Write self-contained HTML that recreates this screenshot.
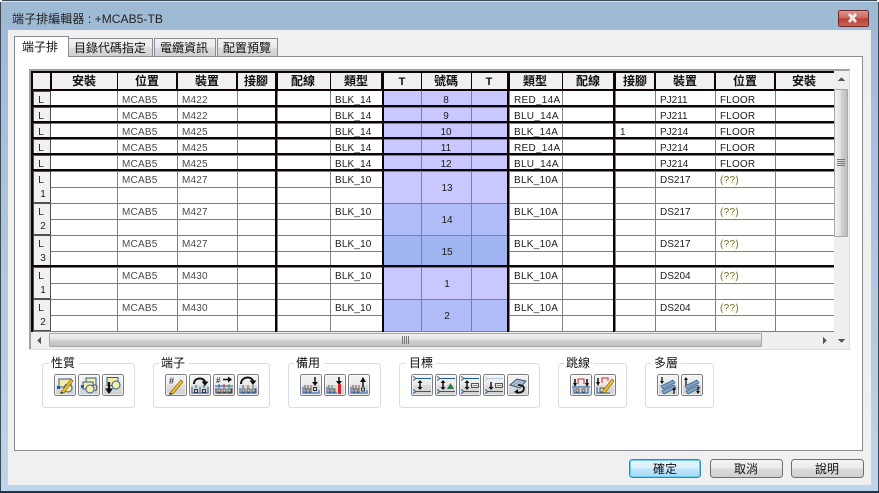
<!DOCTYPE html>
<html><head><meta charset="utf-8"><style>
html,body{margin:0;padding:0;background:#b9d2ea}
svg{display:block;position:absolute;left:0;top:0}
text{font-family:"Liberation Sans","Noto Sans CJK TC",sans-serif;font-size:10px;fill:#1c1c1c}
.c{font-family:"Liberation Sans","Noto Sans CJK TC",sans-serif;font-size:12px;fill:#111}
.h{font-family:"Liberation Sans","Noto Sans CJK TC",sans-serif;font-size:12px;font-weight:bold;fill:#111;text-anchor:middle}
.m{text-anchor:middle}
.g{fill:#4a4a4a;letter-spacing:.2px}
.y{fill:#7a6a20;letter-spacing:.3px}
.t{letter-spacing:.28px}
.k{letter-spacing:.15px}
</style></head><body>
<svg width="879" height="493" viewBox="0 0 879 493" shape-rendering="crispEdges">
<defs>
<linearGradient id="tb" x1="0" y1="0" x2="0" y2="1"><stop offset="0" stop-color="#9db9d4"/><stop offset="1" stop-color="#bdd5ec"/></linearGradient>
<linearGradient id="tab" x1="0" y1="0" x2="0" y2="1"><stop offset="0" stop-color="#f3f3f3"/><stop offset=".5" stop-color="#ebebeb"/><stop offset=".5" stop-color="#dddddd"/><stop offset="1" stop-color="#cfcfcf"/></linearGradient>
<linearGradient id="btn" x1="0" y1="0" x2="0" y2="1"><stop offset="0" stop-color="#f4f4f4"/><stop offset=".5" stop-color="#ebebeb"/><stop offset=".5" stop-color="#dcdcdc"/><stop offset="1" stop-color="#cfcfcf"/></linearGradient>
<linearGradient id="ok" x1="0" y1="0" x2="0" y2="1"><stop offset="0" stop-color="#eaf6fd"/><stop offset=".5" stop-color="#d9f0fc"/><stop offset=".5" stop-color="#bee6fd"/><stop offset="1" stop-color="#a7d9f5"/></linearGradient>
<linearGradient id="cl" x1="0" y1="0" x2="0" y2="1"><stop offset="0" stop-color="#dc9a92"/><stop offset=".5" stop-color="#c8635a"/><stop offset=".5" stop-color="#b93a30"/><stop offset="1" stop-color="#c9685e"/></linearGradient>
<linearGradient id="sh" x1="0" y1="0" x2="0" y2="1"><stop offset="0" stop-color="#f2f2f2"/><stop offset=".45" stop-color="#e4e4e4"/><stop offset=".5" stop-color="#d4d4d4"/><stop offset="1" stop-color="#bcbcbc"/></linearGradient>
<linearGradient id="sv" x1="0" y1="0" x2="1" y2="0"><stop offset="0" stop-color="#f2f2f2"/><stop offset=".45" stop-color="#e4e4e4"/><stop offset=".5" stop-color="#d4d4d4"/><stop offset="1" stop-color="#bcbcbc"/></linearGradient>
<g id="b"><rect x=".5" y=".5" width="21" height="21" rx="2" fill="url(#btn)" stroke="#7d7d7d"/><rect x="1.5" y="1.5" width="19" height="19" rx="1" fill="none" stroke="#fff" stroke-opacity=".6"/></g>
</defs>

<!-- window frame -->
<rect x="0" y="0" width="879" height="493" fill="#3d4a55"/>
<rect x="1" y="1" width="877" height="490" fill="url(#tb)"/>
<rect x="1" y="1" width="877" height="1" fill="#d5e2ee"/>
<rect x="8" y="30" width="863" height="455" fill="#f0f0f0"/>
<rect x="0" y="491" width="879" height="2" fill="#26333d"/>
<rect x="0" y="0" width="2" height="1" fill="#fff"/><rect x="0" y="1" width="1" height="1" fill="#fff"/><rect x="877" y="0" width="2" height="1" fill="#fff"/><rect x="878" y="1" width="1" height="1" fill="#fff"/>
<text x="12" y="23" class="c" style="fill:#222;letter-spacing:.07px">端子排編輯器 : +MCAB5-TB</text>

<!-- close -->
<rect x="838.5" y="10.5" width="30" height="16" rx="2" fill="url(#cl)" stroke="#6e2a28"/>
<g shape-rendering="auto"><path d="M849 14l7 8M856 14l-7 8" stroke="#fff" stroke-width="2.6" fill="none"/><path d="M849 14l7 8M856 14l-7 8" stroke="#555" stroke-width=".5" fill="none" opacity=".4"/></g>

<!-- tab page -->
<rect x="14.5" y="56.5" width="848" height="394" fill="#fff" stroke="#898c95"/>
<rect x="68.5" y="38.5" width="84" height="18" fill="url(#tab)" stroke="#898c95"/>
<rect x="154.5" y="38.5" width="61" height="18" fill="url(#tab)" stroke="#898c95"/>
<rect x="217.5" y="38.5" width="60" height="18" fill="url(#tab)" stroke="#898c95"/>
<rect x="14.5" y="36.5" width="54" height="20" fill="#fff" stroke="#898c95"/>
<rect x="15" y="56" width="53" height="1" fill="#fff"/>
<text x="22" y="51" class="c">端子排</text>
<text x="74" y="52" class="c">目錄代碼指定</text>
<text x="160" y="52" class="c">電纜資訊</text>
<text x="223" y="52" class="c">配置預覽</text>

<!-- grid frame -->
<rect x="29" y="69" width="821" height="281" fill="#f0f0f0"/>
<rect x="29" y="69" width="821" height="2" fill="#a0a0a0"/>
<rect x="29" y="69" width="2" height="281" fill="#a0a0a0"/>
<rect x="849" y="70" width="1" height="280" fill="#e0e0e0"/>
<rect x="29" y="349" width="821" height="1" fill="#e0e0e0"/>
<rect x="33" y="91" width="801" height="241" fill="#fff"/>

<!-- blue cells -->
<rect x="384" y="91" width="123" height="112" fill="#c8c8ff"/>
<rect x="384" y="203" width="123" height="32" fill="#b0bcf8"/>
<rect x="384" y="235" width="123" height="32" fill="#a0b4f2"/>
<rect x="384" y="267" width="123" height="32" fill="#c8c8ff"/>
<rect x="384" y="299" width="123" height="32" fill="#b0bcf8"/>

<!-- gray horizontals -->
<g fill="#808080">
<rect x="33" y="107" width="801" height="1"/><rect x="33" y="123" width="801" height="1"/><rect x="33" y="139" width="801" height="1"/><rect x="33" y="155" width="801" height="1"/><rect x="33" y="171" width="801" height="1"/>
<rect x="33" y="187" width="349" height="1"/><rect x="509" y="187" width="325" height="1"/>
<rect x="33" y="203" width="801" height="1"/>
<rect x="33" y="219" width="349" height="1"/><rect x="509" y="219" width="325" height="1"/>
<rect x="33" y="235" width="801" height="1"/>
<rect x="33" y="251" width="349" height="1"/><rect x="509" y="251" width="325" height="1"/>
<rect x="33" y="267" width="801" height="1"/>
<rect x="33" y="283" width="349" height="1"/><rect x="509" y="283" width="325" height="1"/>
<rect x="33" y="299" width="801" height="1"/>
<rect x="33" y="315" width="349" height="1"/><rect x="509" y="315" width="325" height="1"/>
<rect x="33" y="331" width="801" height="1"/>
<!-- gray verticals -->
<rect x="117" y="91" width="1" height="241"/><rect x="177" y="91" width="1" height="241"/><rect x="237" y="91" width="1" height="241"/><rect x="277" y="91" width="1" height="241"/><rect x="330" y="91" width="1" height="241"/><rect x="421" y="91" width="1" height="241"/><rect x="471" y="91" width="1" height="241"/><rect x="509" y="91" width="1" height="241"/><rect x="562" y="91" width="1" height="241"/><rect x="615" y="91" width="1" height="241"/><rect x="655" y="91" width="1" height="241"/><rect x="715" y="91" width="1" height="241"/><rect x="775" y="91" width="1" height="241"/>
</g>

<!-- header -->
<rect x="31" y="71" width="803" height="20" fill="#0d0505"/>
<g fill="#f0f0f0">
<rect x="33" y="73" width="17" height="16"/><rect x="52" y="73" width="65" height="16"/><rect x="118" y="73" width="58" height="16"/><rect x="178" y="73" width="58" height="16"/><rect x="238" y="73" width="37" height="16"/><rect x="278" y="73" width="52" height="16"/><rect x="331" y="73" width="50" height="16"/><rect x="384" y="73" width="37" height="16"/><rect x="422" y="73" width="49" height="16"/><rect x="472" y="73" width="35" height="16"/><rect x="510" y="73" width="52" height="16"/><rect x="563" y="73" width="50" height="16"/><rect x="616" y="73" width="38" height="16"/><rect x="656" y="73" width="58" height="16"/><rect x="716" y="73" width="58" height="16"/><rect x="776" y="73" width="58" height="16"/>
</g>
<text x="84" y="85" class="h">安裝</text><text x="147" y="85" class="h">位置</text><text x="207" y="85" class="h">裝置</text><text x="256" y="85" class="h">接腳</text><text x="303" y="85" class="h">配線</text><text x="356" y="85" class="h">類型</text><text x="402" y="85" class="h" style="font-size:11px">T</text><text x="446" y="85" class="h">號碼</text><text x="489" y="85" class="h" style="font-size:11px">T</text><text x="535" y="85" class="h">類型</text><text x="588" y="85" class="h">配線</text><text x="635" y="85" class="h">接腳</text><text x="685" y="85" class="h">裝置</text><text x="745" y="85" class="h">位置</text><text x="804" y="85" class="h">安裝</text>

<!-- row headers -->
<g fill="#f0f0f0" stroke="#505050">
<rect x="33.5" y="91.5" width="17" height="14"/><rect x="33.5" y="107.5" width="17" height="14"/><rect x="33.5" y="123.5" width="17" height="14"/><rect x="33.5" y="139.5" width="17" height="14"/><rect x="33.5" y="155.5" width="17" height="14"/>
<rect x="33.5" y="171.5" width="17" height="31"/><rect x="33.5" y="203.5" width="17" height="31"/><rect x="33.5" y="235.5" width="17" height="30"/><rect x="33.5" y="267.5" width="17" height="31"/><rect x="33.5" y="299.5" width="17" height="31"/>
</g>

<!-- black lines -->
<g fill="#0d0505">
<rect x="31" y="71" width="2" height="261"/>
<rect x="275" y="71" width="2" height="261"/>
<rect x="382" y="71" width="2" height="261"/>
<rect x="507" y="71" width="2" height="261"/>
<rect x="613" y="71" width="2" height="261"/>
<rect x="31" y="105" width="803" height="2"/><rect x="31" y="121" width="803" height="2"/><rect x="31" y="137" width="803" height="2"/><rect x="31" y="153" width="803" height="2"/><rect x="31" y="169" width="803" height="2"/>
<rect x="31" y="265" width="803" height="2"/>
</g>

<text x="41" y="103" class="m">L</text><text x="41" y="119" class="m">L</text><text x="41" y="135" class="m">L</text><text x="41" y="151" class="m">L</text><text x="41" y="167" class="m">L</text>
<text x="41" y="183" class="m">L</text><text x="43" y="197" class="m">1</text>
<text x="41" y="215" class="m">L</text><text x="43" y="229" class="m">2</text>
<text x="41" y="247" class="m">L</text><text x="43" y="261" class="m">3</text>
<text x="41" y="279" class="m">L</text><text x="43" y="293" class="m">1</text>
<text x="41" y="311" class="m">L</text><text x="43" y="325" class="m">2</text>

<!-- data left -->
<text x="122" y="103" class="g">MCAB5</text><text x="182" y="103" class="g">M422</text>
<text x="122" y="119" class="g">MCAB5</text><text x="182" y="119" class="g">M422</text>
<text x="122" y="135" class="g">MCAB5</text><text x="182" y="135" class="g">M425</text>
<text x="122" y="151" class="g">MCAB5</text><text x="182" y="151" class="g">M425</text>
<text x="122" y="167" class="g">MCAB5</text><text x="182" y="167" class="g">M425</text>
<text x="122" y="183" class="g">MCAB5</text><text x="182" y="183" class="g">M427</text>
<text x="122" y="215" class="g">MCAB5</text><text x="182" y="215" class="g">M427</text>
<text x="122" y="247" class="g">MCAB5</text><text x="182" y="247" class="g">M427</text>
<text x="122" y="279" class="g">MCAB5</text><text x="182" y="279" class="g">M430</text>
<text x="122" y="311" class="g">MCAB5</text><text x="182" y="311" class="g">M430</text>
<text x="335" y="103" class="k">BLK_14</text><text x="335" y="119" class="k">BLK_14</text><text x="335" y="135" class="k">BLK_14</text><text x="335" y="151" class="k">BLK_14</text><text x="335" y="167" class="k">BLK_14</text>
<text x="335" y="183" class="k">BLK_10</text><text x="335" y="215" class="k">BLK_10</text><text x="335" y="247" class="k">BLK_10</text><text x="335" y="279" class="k">BLK_10</text><text x="335" y="311" class="k">BLK_10</text>
<!-- numbers -->
<text x="446" y="103" class="m">8</text><text x="446" y="119" class="m">9</text><text x="446" y="135" class="m">10</text><text x="446" y="151" class="m">11</text><text x="446" y="167" class="m">12</text>
<text x="447" y="191" class="m">13</text><text x="447" y="223" class="m">14</text><text x="447" y="255" class="m">15</text><text x="447" y="287" class="m">1</text><text x="447" y="319" class="m">2</text>
<!-- data right -->
<text x="514" y="103" class="t">RED_14A</text><text x="514" y="119" class="t">BLU_14A</text><text x="514" y="135" class="t">BLK_14A</text><text x="514" y="151" class="t">RED_14A</text><text x="514" y="167" class="t">BLU_14A</text>
<text x="514" y="183" class="t">BLK_10A</text><text x="514" y="215" class="t">BLK_10A</text><text x="514" y="247" class="t">BLK_10A</text><text x="514" y="279" class="t">BLK_10A</text><text x="514" y="311" class="t">BLK_10A</text>
<text x="620" y="135">1</text>
<text x="660" y="103">PJ211</text><text x="660" y="119">PJ211</text><text x="660" y="135">PJ214</text><text x="660" y="151">PJ214</text><text x="660" y="167">PJ214</text>
<text x="660" y="183">DS217</text><text x="660" y="215">DS217</text><text x="660" y="247">DS217</text><text x="660" y="279">DS204</text><text x="660" y="311">DS204</text>
<text x="720" y="103" class="k">FLOOR</text><text x="720" y="119" class="k">FLOOR</text><text x="720" y="135" class="k">FLOOR</text><text x="720" y="151" class="k">FLOOR</text><text x="720" y="167" class="k">FLOOR</text>
<text x="720" y="183" class="y">(??)</text><text x="720" y="215" class="y">(??)</text><text x="720" y="247" class="y">(??)</text><text x="720" y="279" class="y">(??)</text><text x="720" y="311" class="y">(??)</text>

<!-- vertical scrollbar -->
<rect x="834" y="71" width="15" height="278" fill="#efefef"/>
<rect x="834.5" y="89.5" width="13" height="147" rx="1" fill="url(#sv)" stroke="#a8a8a8"/>
<path d="M838 81h7l-3.500-4z" fill="#555"/>
<path d="M838 339h7l-3.500 4z" fill="#555"/>
<rect x="837" y="159" width="8" height="1" fill="#777"/><rect x="837" y="161" width="8" height="1" fill="#777"/><rect x="837" y="163" width="8" height="1" fill="#777"/><rect x="837" y="165" width="8" height="1" fill="#777"/>

<!-- horizontal scrollbar -->
<rect x="31" y="332" width="803" height="17" fill="#efefef"/>
<rect x="49.5" y="333.5" width="712" height="13" rx="1" fill="url(#sh)" stroke="#a8a8a8"/>
<path d="M41 337v7l-4-3.500z" fill="#555"/>
<path d="M823 337v7l4-3.500z" fill="#555"/>
<rect x="402" y="336" width="1" height="8" fill="#777"/><rect x="404" y="336" width="1" height="8" fill="#777"/><rect x="406" y="336" width="1" height="8" fill="#777"/><rect x="408" y="336" width="1" height="8" fill="#777"/>

<!-- group boxes -->
<g fill="none" stroke="#d5dfe5" shape-rendering="auto">
<rect x="42.5" y="363.5" width="92" height="44" rx="3"/>
<rect x="153.5" y="363.5" width="116" height="44" rx="3"/>
<rect x="288.5" y="363.5" width="92" height="44" rx="3"/>
<rect x="399.5" y="363.5" width="140" height="44" rx="3"/>
<rect x="558.5" y="363.5" width="68" height="44" rx="3"/>
<rect x="645.5" y="363.5" width="68" height="44" rx="3"/>
</g>
<g fill="#fff">
<rect x="49" y="360" width="30" height="8"/><rect x="159" y="360" width="30" height="8"/><rect x="294" y="360" width="30" height="8"/><rect x="406" y="360" width="30" height="8"/><rect x="564" y="360" width="30" height="8"/><rect x="651" y="360" width="30" height="8"/>
</g>
<text x="51" y="367" class="c">性質</text><text x="161" y="367" class="c">端子</text><text x="296" y="367" class="c">備用</text><text x="409" y="367" class="c">目標</text><text x="566" y="367" class="c">跳線</text><text x="654" y="367" class="c">多層</text>

<!-- buttons -->
<use href="#b" x="54" y="374"/><use href="#b" x="78" y="374"/><use href="#b" x="102" y="374"/>
<use href="#b" x="165" y="374"/><use href="#b" x="189" y="374"/><use href="#b" x="213" y="374"/><use href="#b" x="237" y="374"/>
<use href="#b" x="300" y="374"/><use href="#b" x="324" y="374"/><use href="#b" x="348" y="374"/>
<use href="#b" x="411" y="374"/><use href="#b" x="435" y="374"/><use href="#b" x="459" y="374"/><use href="#b" x="483" y="374"/><use href="#b" x="507" y="374"/>
<use href="#b" x="570" y="374"/><use href="#b" x="594" y="374"/>
<use href="#b" x="657" y="374"/><use href="#b" x="681" y="374"/>

<g shape-rendering="auto" fill="none">
<!-- 性質 1 -->
<g transform="translate(54,374)"><rect x="5" y="5" width="12" height="8" fill="#f6eea8" stroke="#2a5f96"/><circle cx="14" cy="14" r="4" fill="#f6eea8" stroke="#2a5f96"/><rect x="3" y="12" width="3" height="3" fill="#1f5fb0"/><path d="M7 18L17 5l2 2L10 19z" fill="#f2bd2a" stroke="#7a5a10" stroke-width=".6"/><path d="M7 18l3 1-4 1z" fill="#222"/></g>
<!-- 性質 2 -->
<g transform="translate(78,374)"><rect x="8" y="4" width="10" height="7" fill="#f6eea8" stroke="#2a5f96"/><rect x="5" y="8" width="10" height="7" fill="#f6eea8" stroke="#2a5f96"/><circle cx="12" cy="15" r="4" fill="#f6eea8" stroke="#2a5f96"/><rect x="3" y="11" width="3" height="3" fill="#1f5fb0"/><path d="M18 11a4 4 0 0 1-1 6" stroke="#555"/></g>
<!-- 性質 3 -->
<g transform="translate(102,374)"><rect x="5" y="3.500" width="11" height="8" fill="#f6eea8" stroke="#2a5f96"/><circle cx="14" cy="11" r="4" fill="#f6eea8" stroke="#2a5f96"/><path d="M7 8v8" stroke="#111" stroke-width="2.200"/><path d="M3 14.500h8L7 20z" fill="#111"/></g>
<!-- 端子 1 -->
<g transform="translate(165,374)"><text x="4" y="10" style="font-size:9px;fill:#345;font-weight:bold">#</text><path d="M5 19L16 6l2 2L8 20z" fill="#f2bd2a" stroke="#7a5a10" stroke-width=".6"/><path d="M5 19l3 1-4 1z" fill="#222"/></g>
<!-- 端子 2 -->
<g transform="translate(189,374)"><path d="M5 10C5 3 15 3 16 8" stroke="#111" stroke-width="2"/><path d="M12.500 7.500h7L16 12z" fill="#111"/><path d="M3 13v6h16v-6M11 13v6" stroke="#1f5fb0"/><path d="M7 11v3M15 11v3" stroke="#1f5fb0"/><rect x="5.500" y="15.500" width="3" height="3" stroke="#333"/><rect x="13.500" y="15.500" width="3" height="3" stroke="#333"/></g>
<!-- 端子 3 -->
<g transform="translate(213,374)"><text x="3" y="9" style="font-size:8px;fill:#345;font-weight:bold">#</text><path d="M10 5.500h6" stroke="#111" stroke-width="1.500"/><path d="M15 2.500l4 3-4 3z" fill="#111"/><path d="M2 12h18" stroke="#1f5fb0"/><path d="M6 10v4" stroke="#1f5fb0"/><path d="M11 10v4" stroke="#d22"/><path d="M16 10v4" stroke="#2a9a3a"/><path d="M3 14v5h16v-5" stroke="#333"/><path d="M5 15h3v3H5zM10 15h3v3h-3zM15 15h3v3h-3z" stroke="#333" stroke-width=".7"/></g>
<!-- 端子 4 -->
<g transform="translate(237,374)"><path d="M4 10C4 2 15 2 16 7" stroke="#111" stroke-width="2"/><path d="M12.500 6.500h7L16 11z" fill="#111"/><path d="M6 11v3" stroke="#1f5fb0"/><path d="M11 11v3" stroke="#d22"/><path d="M16 11v3" stroke="#2a9a3a"/><path d="M3 14v5h16v-5" stroke="#1f5fb0"/><path d="M5 15h3v3H5zM10 15h3v3h-3zM15 15h3v3h-3z" stroke="#333" stroke-width=".7"/></g>
<!-- 備用 1 -->
<g transform="translate(300,374)"><path d="M15 3v7" stroke="#111" stroke-width="1.500"/><path d="M12 8h6l-3 4z" fill="#111"/><rect x="13.500" y="13.500" width="3" height="3" stroke="#333"/><path d="M5 11v4" stroke="#1f5fb0"/><path d="M8 11v4" stroke="#d22"/><path d="M11 11v4" stroke="#2a9a3a"/><path d="M3 13v6h16v-3" stroke="#1f5fb0"/><path d="M5 15h2v3H5zM9 15h2v3H9z" stroke="#333" stroke-width=".7"/></g>
<!-- 備用 2 -->
<g transform="translate(324,374)"><path d="M15 3v6" stroke="#111" stroke-width="1.500"/><path d="M12 7h6l-3 4z" fill="#111"/><rect x="14" y="10" width="3" height="10" fill="#d22"/><path d="M5 11v4" stroke="#1f5fb0"/><path d="M8 11v4" stroke="#2a9a3a"/><path d="M3 13v6h10" stroke="#1f5fb0"/><path d="M5 15h2v3H5zM9 15h2v3H9z" stroke="#333" stroke-width=".7"/></g>
<!-- 備用 3 -->
<g transform="translate(348,374)"><path d="M15 7v6" stroke="#111" stroke-width="1.500"/><path d="M12 8h6l-3-5z" fill="#111"/><rect x="13.500" y="14" width="3" height="3" stroke="#333"/><path d="M5 11v4" stroke="#1f5fb0"/><path d="M8 11v4" stroke="#d22"/><path d="M11 11v4" stroke="#2a9a3a"/><path d="M3 13v6h16v-3" stroke="#1f5fb0"/><path d="M5 15h2v3H5zM9 15h2v3H9z" stroke="#333" stroke-width=".7"/></g>
<!-- 目標 -->
<g transform="translate(411,374)"><path d="M2 2.500l3 2-3 2M5 4.500h15M2 15.500l3 2-3 2M5 17.500h15" stroke="#1f5f96"/><path d="M9 8v6" stroke="#111" stroke-width="1.500"/><path d="M6.500 9l2.500-3 2.500 3zM6.500 13l2.500 3 2.500-3z" fill="#111"/></g>
<g transform="translate(435,374)"><path d="M2 2.500l3 2-3 2M5 4.500h15M2 15.500l3 2-3 2M5 17.500h15" stroke="#1f5f96"/><path d="M8 8v6" stroke="#111" stroke-width="1.500"/><path d="M5.500 9l2.500-3 2.500 3zM5.500 13l2.500 3 2.500-3z" fill="#111"/><path d="M12 15l3.500-6 3.500 6z" fill="#2a7a4a"/></g>
<g transform="translate(459,374)"><path d="M2 2.500l3 2-3 2M5 4.500h15M2 15.500l3 2-3 2M5 17.500h15" stroke="#1f5f96"/><path d="M8 8v6" stroke="#111" stroke-width="1.500"/><path d="M5.500 9l2.500-3 2.500 3zM5.500 13l2.500 3 2.500-3z" fill="#111"/><rect x="12.500" y="9.500" width="7" height="4" stroke="#555"/><path d="M14 11.500h4" stroke="#888"/></g>
<g transform="translate(483,374)"><path d="M2 2.500l3 2-3 2M5 4.500h15" stroke="#b8cfe0"/><path d="M2 15.500l3 2-3 2M5 17.500h15" stroke="#1f5f96"/><path d="M8 8v6" stroke="#111" stroke-width="1.500"/><path d="M5.500 13l2.500 3 2.500-3z" fill="#111"/><rect x="12.500" y="9.500" width="7" height="4" stroke="#555"/><path d="M14 11.500h4" stroke="#888"/></g>
<g transform="translate(507,374)"><path d="M3 11l7-6 9 2-6 7z" fill="#8fa6bd" stroke="#3d5a78"/><path d="M5 11l6-5M8 12l6-5M11 13l5-5" stroke="#dde6ee" stroke-width=".8"/><path d="M11 11c6 0 7 3 5 6-2 2-4 2-7 1" stroke="#111" stroke-width="1.800"/><path d="M11 15l-4 3 4 2z" fill="#111"/></g>
<!-- 跳線 -->
<g transform="translate(570,374)"><path d="M5 5v6M17 5v6" stroke="#111" stroke-width="1.500"/><path d="M3 9l2 4 2-4zM15 9l2 4 2-4z" fill="#111"/><path d="M8 10V5h6v5" stroke="#d22"/><path d="M2 13h18" stroke="#1f5fb0"/><path d="M4 14v5h14v-5" stroke="#1f5fb0"/><path d="M6 15h3v3H6zM12 15h3v3h-3z" stroke="#333" stroke-width=".7"/></g>
<g transform="translate(594,374)"><path d="M4 4v6" stroke="#111" stroke-width="1.500"/><path d="M2 8l2 4 2-4z" fill="#111"/><path d="M8 9V4h6v3" stroke="#d22"/><path d="M3 13v6h13" stroke="#1f5fb0"/><path d="M6 14h4v4H6z" stroke="#333" stroke-width=".7"/><path d="M8 18L18 5l2 2-9 12z" fill="#f2bd2a" stroke="#7a5a10" stroke-width=".6"/></g>
<!-- 多層 -->
<g transform="translate(657,374)"><path d="M4 12l12-6 2 3-12 6z" fill="#7fa2c4" stroke="#3d6088" stroke-width=".7"/><path d="M5 17l12-6 2 3-12 6z" fill="#7fa2c4" stroke="#3d6088" stroke-width=".7"/><path d="M5 3v6" stroke="#111" stroke-width="1.300"/><path d="M3 7l2 3 2-3z" fill="#111"/><path d="M17 15v5" stroke="#111" stroke-width="1.300"/><path d="M15 16l2-3 2 3z" fill="#111"/></g>
<g transform="translate(681,374)"><path d="M4 12l12-6 2 3-12 6z" fill="#7fa2c4" stroke="#3d6088" stroke-width=".7"/><path d="M5 17l12-6 2 3-12 6z" fill="#7fa2c4" stroke="#3d6088" stroke-width=".7"/><path d="M5 5v6" stroke="#111" stroke-width="1.300"/><path d="M3 6l2-3 2 3z" fill="#111"/><path d="M17 13v5" stroke="#111" stroke-width="1.300"/><path d="M15 17l2 3 2-3z" fill="#111"/></g>
</g>

<!-- bottom buttons -->
<g shape-rendering="auto">
<rect x="629.5" y="459.5" width="71" height="18" rx="3" fill="url(#ok)" stroke="#2a8cbc"/>
<rect x="630.5" y="460.5" width="69" height="16" rx="2" fill="none" stroke="#6cd0f4"/>
<rect x="710.5" y="459.5" width="72" height="18" rx="3" fill="url(#btn)" stroke="#707070"/>
<rect x="791.5" y="459.5" width="72" height="18" rx="3" fill="url(#btn)" stroke="#707070"/>
</g>
<text x="665" y="473" class="c" style="text-anchor:middle">確定</text>
<text x="746" y="473" class="c" style="text-anchor:middle">取消</text>
<text x="827" y="473" class="c" style="text-anchor:middle">說明</text>
</svg>
</body></html>
